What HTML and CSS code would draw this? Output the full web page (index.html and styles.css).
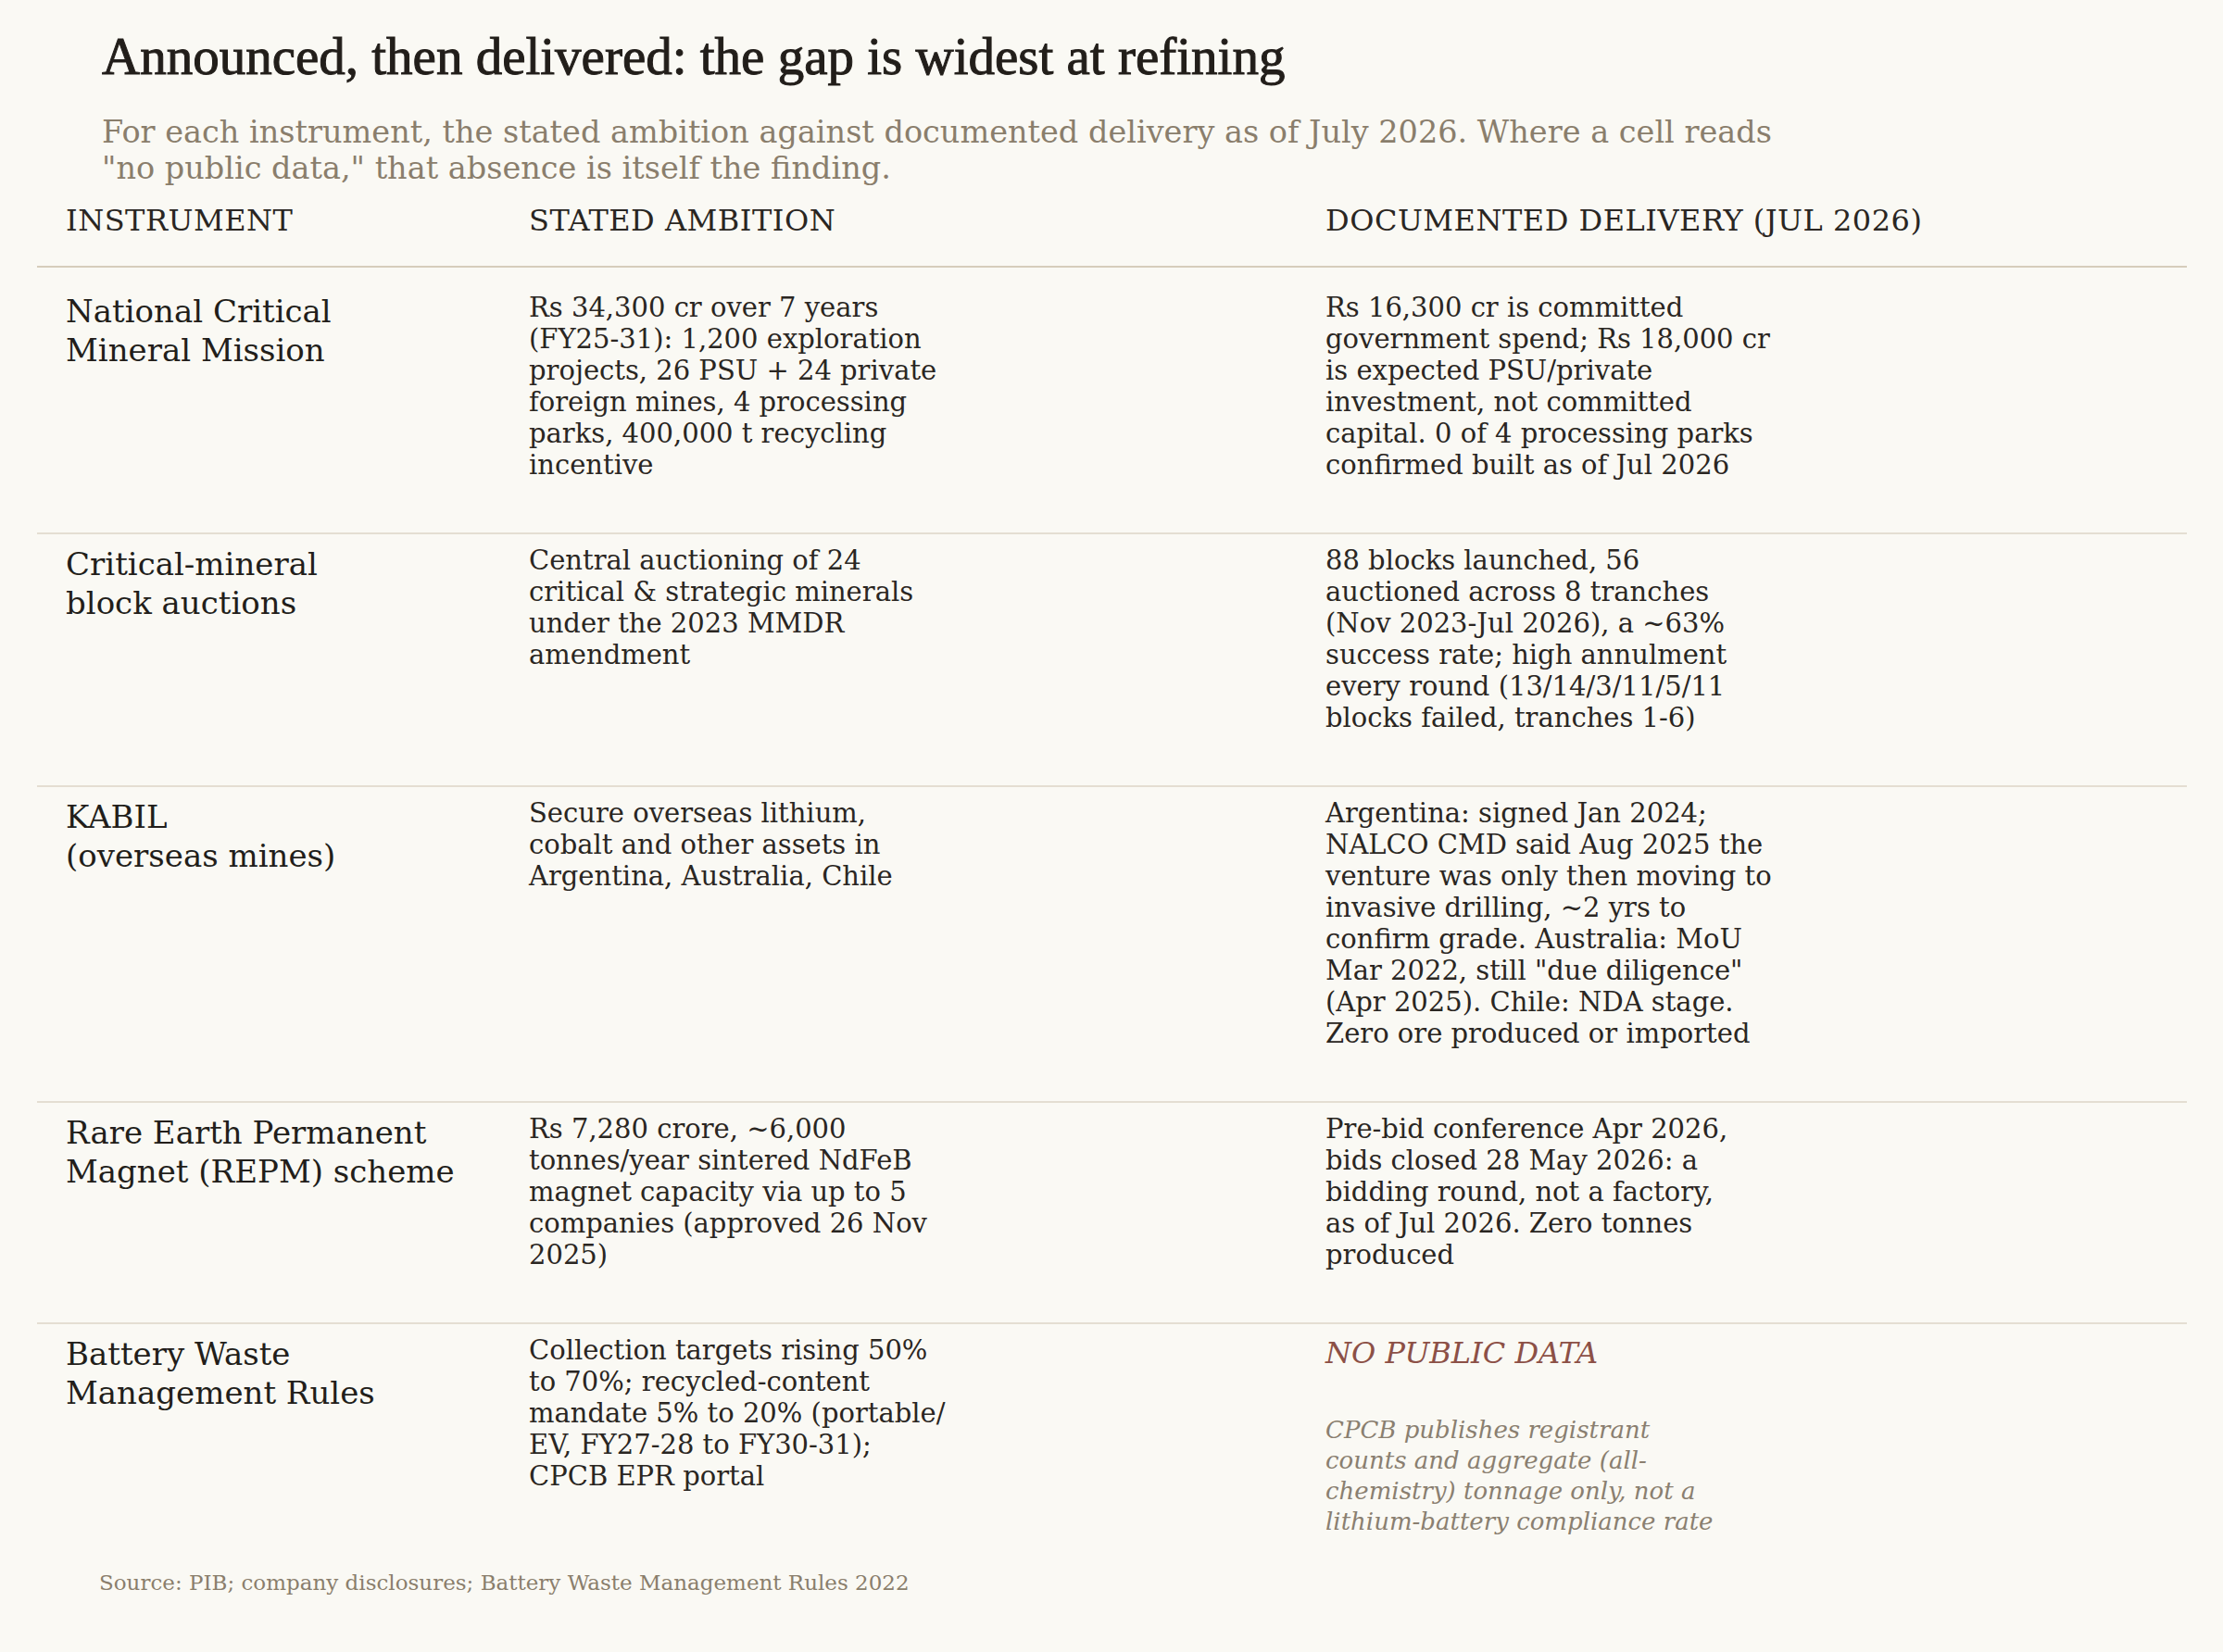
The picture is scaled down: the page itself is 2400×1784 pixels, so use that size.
FILE: index.html
```html
<!DOCTYPE html>
<html lang="en">
<head>
<meta charset="utf-8">
<title>Announced, then delivered</title>
<link rel="stylesheet" href="styles.css">
</head>
<body>
<div class="page">
  <header class="intro">
    <h1 class="title">Announced, then delivered: the gap is widest at refining</h1>
    <p class="subtitle">For each instrument, the stated ambition against documented delivery as of July 2026. Where a cell reads "no public data," that absence is itself the finding.</p>
  </header>

  <div class="table">
    <div class="row head">
      <div class="cell">INSTRUMENT</div>
      <div class="cell">STATED AMBITION</div>
      <div class="cell">DOCUMENTED DELIVERY (JUL 2026)</div>
    </div>

    <div class="row">
      <div class="cell name">National Critical<br>Mineral Mission</div>
      <div class="cell text ambition">Rs 34,300 cr over 7 years (FY25-31): 1,200 exploration projects, 26 PSU + 24 private foreign mines, 4 processing parks, 400,000 t recycling incentive</div>
      <div class="cell text delivery">Rs 16,300 cr is committed government spend; Rs 18,000 cr is expected PSU/private investment, not committed capital. 0 of 4 processing parks confirmed built as of Jul 2026</div>
    </div>

    <div class="row">
      <div class="cell name">Critical-mineral<br>block auctions</div>
      <div class="cell text ambition">Central auctioning of 24 critical &amp; strategic minerals under the 2023 MMDR amendment</div>
      <div class="cell text delivery">88 blocks launched, 56 auctioned across 8 tranches (Nov 2023-Jul 2026), a ~63% success rate; high annulment every round (13/14/3/11/5/11 blocks failed, tranches 1-6)</div>
    </div>

    <div class="row">
      <div class="cell name">KABIL<br>(overseas mines)</div>
      <div class="cell text ambition">Secure overseas lithium, cobalt and other assets in Argentina, Australia, Chile</div>
      <div class="cell text delivery">Argentina: signed Jan 2024; NALCO CMD said Aug 2025 the venture was only then moving to invasive drilling, ~2 yrs to confirm grade. Australia: MoU Mar 2022, still "due diligence" (Apr 2025). Chile: NDA stage. Zero ore produced or imported</div>
    </div>

    <div class="row">
      <div class="cell name">Rare Earth Permanent<br>Magnet (REPM) scheme</div>
      <div class="cell text ambition">Rs 7,280 crore, ~6,000 tonnes/year sintered NdFeB magnet capacity via up to 5 companies (approved 26 Nov 2025)</div>
      <div class="cell text delivery">Pre-bid conference Apr 2026, bids closed 28 May 2026: a bidding round, not a factory, <span class="keep">as of Jul 2026.</span> Zero tonnes produced</div>
    </div>

    <div class="row">
      <div class="cell name">Battery Waste<br>Management Rules</div>
      <div class="cell text ambition">Collection targets rising 50% to 70%; recycled-content mandate 5% to 20% (portable/ EV, FY27-28 to FY30-31); CPCB EPR portal</div>
      <div class="cell delivery">
        <div class="nodata">NO PUBLIC DATA</div>
        <p class="note">CPCB publishes registrant counts and aggregate (all-chemistry) tonnage only, not a lithium-battery compliance rate</p>
      </div>
    </div>
  </div>

  <p class="source">Source: PIB; company disclosures; Battery Waste Management Rules 2022</p>
</div>
</body>
</html>
```

FILE: styles.css
```css
html, body {
  margin: 0;
  background: #faf9f4;
}

body {
  font-family: "DejaVu Serif", serif;
  color: #2a2622;
}

.page {
  padding: 29px 39px 40px 40px;
}

.intro {
  padding-left: 70px;
}

.title {
  margin: 0;
  font-family: "Liberation Serif", serif;
  font-weight: 400;
  font-size: 57px;
  line-height: 64px;
  color: #221e1a;
  -webkit-text-stroke: 1px #221e1a;
}

.subtitle {
  margin: 30px 0 0;
  font-size: 33.5px;
  line-height: 39px;
  color: #8a7e6c;
  max-width: 1830px;
}

.table {
  margin-top: 17px;
}

.row {
  display: grid;
  grid-template-columns: 500px 860px 1fr;
  padding: 11px 0 56px 31px;
  border-bottom: 2px solid #e4ded2;
}

.row.head {
  padding: 0 0 29px 31px;
  border-bottom: 2px solid #d6cdbb;
  font-size: 32px;
  line-height: 40px;
  letter-spacing: 0.5px;
  color: #2a2622;
}

.row.head + .row {
  padding-top: 26px;
}

.row:last-child {
  border-bottom: none;
  padding-bottom: 0;
}

.name {
  font-size: 34px;
  line-height: 42px;
  color: #221e1a;
}

.text {
  font-size: 29px;
  line-height: 34px;
  color: #2a2622;
}

.ambition {
  max-width: 457px;
}

.delivery {
  max-width: 488px;
}

.keep {
  white-space: nowrap;
}

.nodata {
  padding-top: 3px;
  font-style: italic;
  font-size: 32px;
  line-height: 34px;
  color: #8c5046;
}

.note {
  margin: 50px 0 0;
  font-style: italic;
  font-size: 26px;
  line-height: 33px;
  color: #8a7f70;
  max-width: 430px;
}

.source {
  margin: 35px 0 0;
  padding-left: 67px;
  font-size: 23px;
  line-height: 28px;
  color: #8a7e6c;
}
```
